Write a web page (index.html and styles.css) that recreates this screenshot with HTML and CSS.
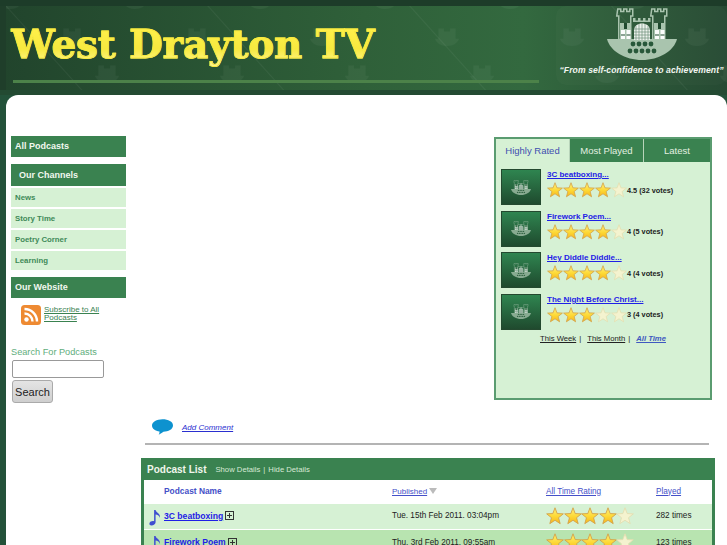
FILE: index.html
```html
<!DOCTYPE html>
<html lang="en">
<head>
<meta charset="utf-8">
<title>West Drayton TV</title>
<link rel="stylesheet" href="styles.css">
</head>
<body>
<svg class="defs" width="0" height="0" aria-hidden="true">
  <defs>
    <linearGradient id="starFill" x1="0" y1="0" x2="0" y2="1">
      <stop offset="0" stop-color="#fff27a"/><stop offset=".55" stop-color="#fdd835"/><stop offset="1" stop-color="#f7b51c"/>
    </linearGradient>
    <symbol id="star" viewBox="0 0 16 16">
      <path d="M8 .7L9.940 5.830 15.400 6.100 11.140 9.520 12.600 14.800 8 11.800 3.400 14.800 4.860 9.520 .6 6.100 6.060 5.830z" fill="url(#starFill)" stroke="#d3a24a" stroke-width=".8"/>
    </symbol>
    <symbol id="starOff" viewBox="0 0 16 16">
      <path d="M8 .7L9.940 5.830 15.400 6.100 11.140 9.520 12.600 14.800 8 11.800 3.400 14.800 4.860 9.520 .6 6.100 6.060 5.830z" fill="#f4f3cf" stroke="#e3deb0" stroke-width=".8"/>
    </symbol>
    <symbol id="crest" viewBox="0 0 70 52">
      <path d="M10.750 1h3v2.500h3V1h3v2.500h3V1h3v7h-2v23.500h-12V8h-2zM44.750 1h3v2.500h3V1h3v2.500h3V1h3v7h-2v23.500h-12V8h-2z" fill="none" stroke="#a9c4ae" stroke-width="1.500"/>
      <path d="M26 10h2.500v2.500h2.500V10h2.500v2.500H36V10h2.500v2.500H41V10h2.500v4H26z" fill="#a9c4ae"/>
      <path d="M13 15h11v17H13zM47 15h11v17H47z" fill="#a9c4ae"/>
      <path d="M0 31h70c-3 12-18 21-35 21S3 43 0 31z" fill="#a9c4ae"/>
      <path d="M27 32V23c0-5.500 3.800-7.500 8-7.500s8 2 8 7.500v9z" fill="#eef3ee"/>
      <path d="M29 18v14M32 16v16M35 16v16M38 16v16M41 18v14M27 21h16M27 24h16M27 27h16M27 30h16" stroke="#6f8f78" stroke-width=".7" fill="none"/>
      <path d="M17 15h3v6h-3zM51 15h3v6h-3z" fill="#1f4a2e"/>
      <path d="M14 22h4v9h-4zM19.500 22h4v9h-4zM48 22h4v9h-4zM53.500 22h4v9h-4z" fill="#fbfcfb"/>
      <path d="M14 26.500h4v1h-4zM19.500 26.500h4v1h-4zM48 26.500h4v1h-4zM53.500 26.500h4v1h-4z" fill="#1f4a2e"/>
      <g fill="#28583a">
        <circle cx="26" cy="36" r="2.400"/><circle cx="32" cy="36" r="2.400"/><circle cx="38" cy="36" r="2.400"/><circle cx="44" cy="36" r="2.400"/>
        <circle cx="23" cy="43" r="2.400"/><circle cx="29" cy="43" r="2.400"/><circle cx="35" cy="43" r="2.400"/><circle cx="41" cy="43" r="2.400"/><circle cx="47" cy="43" r="2.400"/>
      </g>
    </symbol>
    <symbol id="watermark" viewBox="0 0 70 52">
      <path d="M10 1h16v30H10zM44 1h16v30H44zM26 10h18v21H26zM0 31h70c-3 12-18 21-35 21S3 43 0 31z" fill="#cfe3d2"/>
    </symbol>
    <symbol id="note" viewBox="0 0 14 18">
      <path d="M5.500 1h1.600c.5 3 5.400 3.500 4.700 8.500-.5-2.300-2.600-3.500-4.700-3.800V14c0 2-2.300 3.500-4.300 3.500S0 16.300.6 14.800c.6-1.400 3-2.400 4.900-1.700z" fill="#3f4fd0"/>
    </symbol>
  </defs>
</svg>

<header class="masthead">
  <svg class="masthead-art" width="727" height="95" aria-hidden="true">
    <defs>
      <linearGradient id="headBg" x1="0" y1="0" x2="1" y2="0">
        <stop offset="0" stop-color="#21442c"/><stop offset=".5" stop-color="#2f6039"/><stop offset=".72" stop-color="#33693f"/><stop offset="1" stop-color="#264a33"/>
      </linearGradient>
      <pattern id="wm" width="125" height="111" patternUnits="userSpaceOnUse">
        <use href="#watermark" x="-2" y="-9" width="24" height="18" opacity=".05"/>
        <use href="#watermark" x="60" y="28" width="24" height="18" opacity=".05"/>
        <use href="#watermark" x="95" y="65" width="24" height="18" opacity=".05"/>
      </pattern>
      <pattern id="diag" width="150" height="150" patternUnits="userSpaceOnUse" patternTransform="rotate(-42)">
        <rect x="0" width="1" height="150" fill="#fff" opacity=".05"/>
      </pattern>
    </defs>
    <rect width="727" height="95" fill="url(#headBg)"/>
    <rect width="727" height="95" fill="url(#wm)"/>
    <rect width="727" height="95" fill="url(#diag)"/>
    <rect width="727" height="6" fill="#1d3c29"/>
    <rect x="0" y="6" width="6" height="89" fill="#1f3e2a"/>
    <rect x="556" y="6" width="171" height="79" rx="10" fill="#fff" opacity=".02"/>
    <rect y="90" width="727" height="5" fill="#234a32"/>
  </svg>
  <div class="brand">
    <h1 class="site-title">West Drayton TV</h1>
    <div class="brand-rule"></div>
  </div>
  <div class="motto-block">
    <svg class="castle" width="70" height="52" aria-hidden="true"><use href="#crest"/></svg>
    <p class="motto">“From self-confidence to achievement”</p>
  </div>
</header>

<div class="page">
  <aside class="sidebar">
    <a class="side-head single" href="#">All Podcasts</a>
    <section class="side-group">
      <h2 class="side-head indented">Our Channels</h2>
      <a class="side-link" href="#">News</a>
      <a class="side-link" href="#">Story Time</a>
      <a class="side-link" href="#">Poetry Corner</a>
      <a class="side-link" href="#">Learning</a>
    </section>
    <h2 class="side-head">Our Website</h2>
    <div class="subscribe">
      <svg class="rss" width="20" height="20" viewBox="0 0 20 20" aria-hidden="true">
        <rect width="20" height="20" rx="3.500" fill="#ee8a32"/>
        <circle cx="5.500" cy="14.500" r="2.200" fill="#fff"/>
        <path d="M3.500 8.500a8 8 0 0 1 8 8M3.500 4a12.500 12.500 0 0 1 12.500 12.500" fill="none" stroke="#fff" stroke-width="2.400"/>
      </svg>
      <a href="#">Subscribe to All Podcasts</a>
    </div>
    <form class="search">
      <label class="search-label" for="q">Search For Podcasts</label>
      <input class="search-input" id="q" type="text">
      <button class="search-btn" type="button">Search</button>
    </form>
  </aside>

  <main class="content">
    <div class="top-row">
      <section class="tabs-panel">
        <nav class="tabs">
          <a class="tab active" href="#">Highly Rated</a>
          <a class="tab" href="#">Most Played</a>
          <a class="tab" href="#">Latest</a>
        </nav>
        <ul class="rated">
          <li class="rated-item">
            <div class="thumb"><svg width="20" height="15"><use href="#crest"/></svg></div>
            <div class="rated-body">
              <a class="rated-title" href="#">3C beatboxing...</a>
              <div class="rated-score">
                <span class="stars"><svg><use href="#star"/></svg><svg><use href="#star"/></svg><svg><use href="#star"/></svg><svg><use href="#star"/></svg><svg><use href="#starOff"/></svg></span>
                <span>4.5 (32 votes)</span>
              </div>
            </div>
          </li>
          <li class="rated-item">
            <div class="thumb"><svg width="20" height="15"><use href="#crest"/></svg></div>
            <div class="rated-body">
              <a class="rated-title" href="#">Firework Poem...</a>
              <div class="rated-score">
                <span class="stars"><svg><use href="#star"/></svg><svg><use href="#star"/></svg><svg><use href="#star"/></svg><svg><use href="#star"/></svg><svg><use href="#starOff"/></svg></span>
                <span>4 (5 votes)</span>
              </div>
            </div>
          </li>
          <li class="rated-item">
            <div class="thumb"><svg width="20" height="15"><use href="#crest"/></svg></div>
            <div class="rated-body">
              <a class="rated-title" href="#">Hey Diddle Diddle...</a>
              <div class="rated-score">
                <span class="stars"><svg><use href="#star"/></svg><svg><use href="#star"/></svg><svg><use href="#star"/></svg><svg><use href="#star"/></svg><svg><use href="#starOff"/></svg></span>
                <span>4 (4 votes)</span>
              </div>
            </div>
          </li>
          <li class="rated-item">
            <div class="thumb"><svg width="20" height="15"><use href="#crest"/></svg></div>
            <div class="rated-body">
              <a class="rated-title" href="#">The Night Before Christ...</a>
              <div class="rated-score">
                <span class="stars"><svg><use href="#star"/></svg><svg><use href="#star"/></svg><svg><use href="#star"/></svg><svg><use href="#starOff"/></svg><svg><use href="#starOff"/></svg></span>
                <span>3 (4 votes)</span>
              </div>
            </div>
          </li>
        </ul>
        <div class="period">
          <a href="#">This Week</a><span>|</span><a href="#">This Month</a><span>|</span><a class="current" href="#">All Time</a>
        </div>
      </section>
    </div>

    <div class="comment-row">
      <svg class="bubble" width="21" height="16" viewBox="0 0 22 16" aria-hidden="true">
        <path d="M11 0c6 0 11 2.500 11 6.500S17 13 12 13c-1.500 1-3 2.300-5 3 .7-1 1-2 .9-3.300C3.500 12.200 0 10 0 6.500S5 0 11 0z" fill="#0d92cf"/>
      </svg>
      <a href="#">Add Comment</a>
    </div>
    <hr class="divider">

    <section class="podcast-list">
      <div class="list-head">
        <h2>Podcast List</h2>
        <a href="#">Show Details</a><span>|</span><a href="#">Hide Details</a>
      </div>
      <div class="list-row columns">
        <span></span>
        <span class="col-name">Podcast Name</span>
        <span class="col-published"><a href="#">Published</a><i class="sort"></i></span>
        <a href="#">All Time Rating</a>
        <a href="#">Played</a>
      </div>
      <div class="list-row odd">
        <svg class="note" width="13" height="17"><use href="#note"/></svg>
        <span class="ep"><a href="#">3C beatboxing</a><i class="plus"></i></span>
        <span>Tue. 15th Feb 2011. 03:04pm</span>
        <span class="stars"><svg><use href="#star"/></svg><svg><use href="#star"/></svg><svg><use href="#star"/></svg><svg><use href="#star"/></svg><svg><use href="#starOff"/></svg></span>
        <span>282 times</span>
      </div>
      <div class="list-row even">
        <svg class="note" width="13" height="17"><use href="#note"/></svg>
        <span class="ep"><a href="#">Firework Poem</a><i class="plus"></i></span>
        <span>Thu. 3rd Feb 2011. 09:55am</span>
        <span class="stars"><svg><use href="#star"/></svg><svg><use href="#star"/></svg><svg><use href="#star"/></svg><svg><use href="#star"/></svg><svg><use href="#starOff"/></svg></span>
        <span>123 times</span>
      </div>
    </section>
  </main>
</div>
</body>
</html>
```
FILE: styles.css
```css
* { box-sizing: border-box; }
html, body { margin: 0; padding: 0; height: 545px; overflow: hidden; }
body { background: #23523a; font-family: "Liberation Sans", Arial, sans-serif; color: #222; }
a { color: inherit; }
ul { list-style: none; margin: 0; padding: 0; }
.defs { position: absolute; }

.masthead { position: relative; height: 95px; display: flex; justify-content: space-between; }
.masthead-art { position: absolute; left: 0; top: 0; }
.brand { position: relative; padding: 20px 0 0 11px; }
.site-title {
  margin: 0; font-family: "DejaVu Serif", serif; font-weight: 700; font-size: 39px; line-height: 48px;
  white-space: nowrap; letter-spacing: -.2px;
  -webkit-text-stroke: .8px #f8ea3e;
  background: linear-gradient(#fff04a 20%, #f7e93f 60%, #fff58a 90%);
  -webkit-background-clip: text; background-clip: text; color: transparent;
}
.brand-rule { width: 526px; height: 3px; margin: 12px 0 0 2px; background: #4c8249; }
.motto-block { position: relative; width: 171px; padding-top: 8px; display: flex; flex-direction: column; align-items: center; }
.motto { margin: 5px 0 0; font: italic 700 8.600px/10px "Liberation Sans", sans-serif; letter-spacing: .1px; color: #f2f6f0; white-space: nowrap; }

.page { margin-left: 6px; height: 450px; background: #fff; border-radius: 12px 12px 0 0; display: flex; overflow: hidden; }

.sidebar { width: 120px; flex: none; margin-left: 5px; padding-top: 41px; }
.side-head {
  display: flex; align-items: center; height: 21px; margin: 0; padding: 0 0 1px 4px; background: #3a8250; color: #f1f7ef;
  font-size: 9px; font-weight: 700; text-decoration: none; width: 115px;
}
.side-head.single { margin-bottom: 7px; }
.side-head.indented { padding-left: 8px; height: 22px; }
.side-group { margin-bottom: 7px; }
.side-link {
  display: flex; align-items: center; width: 115px; height: 19px; margin-top: 2px; padding-left: 4px;
  background: #d6f1d4; color: #3f8a58; font-size: 7.800px; font-weight: 700; text-decoration: none;
}
.subscribe { display: flex; align-items: flex-start; gap: 3px; padding: 7px 0 0 10px; width: 115px; font-size: 8px; line-height: 8px; color: #3a8250; }
.rss { flex: none; }
.subscribe a { padding-top: 1px; }
.search { display: flex; flex-direction: column; align-items: flex-start; margin-top: 21px; }
.search-label { font-size: 9.200px; line-height: 12px; color: #5fae7c; white-space: nowrap; }
.search-input { width: 92px; height: 18px; margin: 2px 0 0 1px; border: 1px solid #999; border-radius: 2px; background: #fff; padding: 0; }
.search-btn { width: 41px; height: 23px; margin: 2px 0 0 1px; padding: 0; border: 1px solid #aaa; border-radius: 3px; background: linear-gradient(#e4e4e4, #cfcfcf); font: 11px "Liberation Sans", sans-serif; color: #222; }

.content { flex: 1; min-width: 0; padding: 42px 12px 0 10px; }
.top-row { display: flex; justify-content: flex-end; height: 263px; padding-right: 3px; }
.tabs-panel { width: 218px; height: 263px; border: 2px solid #5a9c70; background: #d6f1d4; }
.tabs { display: flex; height: 23px; }
.tab { display: flex; align-items: center; justify-content: center; background: #3a8250; color: #e3f0e0; font-size: 9.500px; text-decoration: none; border-left: 1px solid #b8d4ba; flex: 1; }
.tab.active { flex: none; width: 73px; background: #d6f1d4; color: #3e4fb0; border-left: 0; }
.tab:nth-child(2) { flex: none; width: 74px; }
.rated { padding: 7px 0 0 5px; }
.rated-item { display: flex; gap: 6px; height: 41.500px; }
.thumb { width: 40px; height: 36px; flex: none; display: flex; align-items: center; justify-content: center; border: 1px solid #24492f; background: linear-gradient(#2f8550, #1f4a2e); }
.thumb svg { opacity: .75; }
.rated-title { display: block; font-size: 8px; font-weight: 700; line-height: 11px; color: #1f20e6; white-space: nowrap; }
.rated-score { display: flex; align-items: center; margin-top: 2px; font-size: 7.300px; font-weight: 700; color: #222; }
.stars { display: inline-flex; }
.stars svg { width: 16px; height: 16px; flex: none; }
.period { display: flex; justify-content: center; gap: 3px; font-size: 7.700px; color: #222; margin-top: -1px; }
.period .current { margin-left: 3px; color: #3f58c0; font-style: italic; font-weight: 700; }
.period span + a { margin-left: 3px; }

.comment-row { display: flex; align-items: center; gap: 9px; padding-left: 11px; margin-top: 19px; height: 16px; font-size: 8px; font-style: italic; color: #2a2fd0; }
.divider { height: 2px; margin: 8px 6px 0 4px; border: 0; background: #b4b4b4; }

.podcast-list { margin-top: 13px; border: 3px solid #3a8250; border-bottom: 0; width: 574px; }
.list-head { display: flex; align-items: center; gap: 3px; height: 19px; padding-bottom: 2px; background: #3a8250; color: #d8ead6; font-size: 7.700px; }
.list-head h2 { margin: 0 6px 0 3px; font-size: 10px; color: #f0f6ec; }
.list-head a { text-decoration: none; }
.list-row { display: grid; grid-template-columns: 20px 228px 154px 110px 1fr; align-items: center; font-size: 8.200px; }
.list-row.columns { height: 24px; padding-bottom: 2px; background: #fff; color: #4450c8; }
.col-name { font-weight: 700; font-size: 8.400px; }
.col-published { display: flex; align-items: flex-start; gap: 2px; font-size: 8px; }
.sort { width: 0; height: 0; margin-top: 1px; border: 4px solid transparent; border-top: 6px solid #bbb; border-bottom: 0; }
.list-row.odd { height: 25px; background: #d6f1d4; margin-bottom: 1px; padding-bottom: 2px; }
.list-row.even { height: 26px; background: #b8e4b0; padding-bottom: 2px; }
.note { margin-left: 5px; margin-top: 3px; }
.ep { display: flex; align-items: center; gap: 2px; }
.ep a { color: #1f20e6; font-weight: 700; font-size: 8.600px; }
.plus { width: 9px; height: 9px; border: 1px solid #333; background: linear-gradient(#333,#333) center/5px 1px no-repeat, linear-gradient(#333,#333) center/1px 5px no-repeat; }
.list-row .stars svg { width: 18px; height: 18px; margin-right: -.5px; }
```
